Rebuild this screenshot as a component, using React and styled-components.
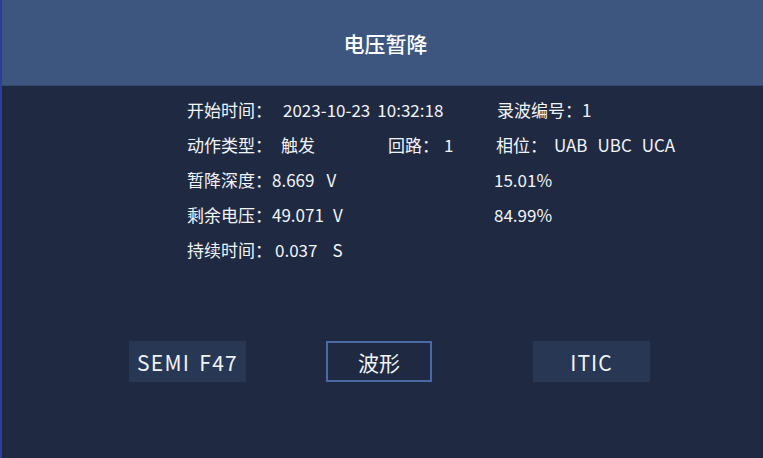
import styled, { createGlobalStyle } from "styled-components";

const GlobalStyle = createGlobalStyle`
  html, body {
    margin: 0;
    padding: 0;
    background: #1f2a42;
  }
  body {
    font-family: "Noto Sans CJK SC", "Noto Sans", sans-serif;
    color: #f2f4f8;
  }
`;

const Screen = styled.div`
  width: 763px;
  height: 458px;
  background: #1f2a42;
  border-left: 2px solid #2a3f98;
  box-sizing: border-box;
  display: flex;
  flex-direction: column;
  overflow: hidden;
`;

const Header = styled.div`
  height: 85px;
  background: #3d5680;
  border-bottom: 1px solid #34496d;
  display: flex;
  align-items: center;
  justify-content: center;
  padding-left: 6px;
  font-size: 21px;
  font-weight: 500;
  color: #ffffff;
`;

const Info = styled.div`
  margin: 6px 0 0 185px;
  display: grid;
  grid-template-columns: 94px 105px 108px auto;
  grid-auto-rows: 35px;
  align-items: center;
  font-size: 17px;
  white-space: nowrap;
`;

const Cell = styled.div`
  grid-column: ${(p) => p.$col || "auto"};
  padding-left: ${(p) => p.$pad || 0}px;
  display: flex;
  align-items: center;
`;

const Gap = styled.span`
  display: inline-block;
  width: ${(p) => p.$w}px;
`;

const Buttons = styled.div`
  margin-top: 74px;
  padding-left: 127px;
  display: flex;
  align-items: center;
`;

const Button = styled.div`
  width: ${(p) => p.$w}px;
  height: 41px;
  margin-left: ${(p) => p.$ml || 0}px;
  box-sizing: border-box;
  display: flex;
  align-items: center;
  justify-content: center;
  font-size: 21px;
  letter-spacing: ${(p) => p.$ls || 0}px;
  color: #f2f4f8;
  background: ${(p) => (p.$active ? "transparent" : "#273754")};
  border: ${(p) => (p.$active ? "2px solid #4a6aa6" : "none")};
`;

export default function App() {
  return (
    <>
      <GlobalStyle />
      <Screen>
        <Header>电压暂降</Header>
        <Info>
          <Cell $col="1">开始时间：</Cell>
          <Cell $col="2 / 4" $pad={2}>
            2023-10-23<Gap $w={7} />10:32:18
          </Cell>
          <Cell $col="4" $pad={3}>录波编号：1</Cell>

          <Cell $col="1">动作类型：</Cell>
          <Cell $col="2">触发</Cell>
          <Cell $col="3" $pad={2}>
            回路：<Gap $w={5} />1
          </Cell>
          <Cell $col="4" $pad={2}>
            相位：<Gap $w={7} />UAB<Gap $w={10} />UBC<Gap $w={10} />UCA
          </Cell>

          <Cell $col="1 / 4">
            暂降深度：8.669<Gap $w={12} />V
          </Cell>
          <Cell $col="4">15.01%</Cell>

          <Cell $col="1 / 4">
            剩余电压：49.071<Gap $w={9} />V
          </Cell>
          <Cell $col="4">84.99%</Cell>

          <Cell $col="1 / 4">
            持续时间：<Gap $w={3} />0.037<Gap $w={15} />S
          </Cell>
        </Info>
        <Buttons>
          <Button $w={117} $ls={1.3}>
            SEMI<Gap $w={9} />F47
          </Button>
          <Button $w={106} $ml={80} $active>
            波形
          </Button>
          <Button $w={117} $ml={101} $ls={1}>
            ITIC
          </Button>
        </Buttons>
      </Screen>
    </>
  );
}
